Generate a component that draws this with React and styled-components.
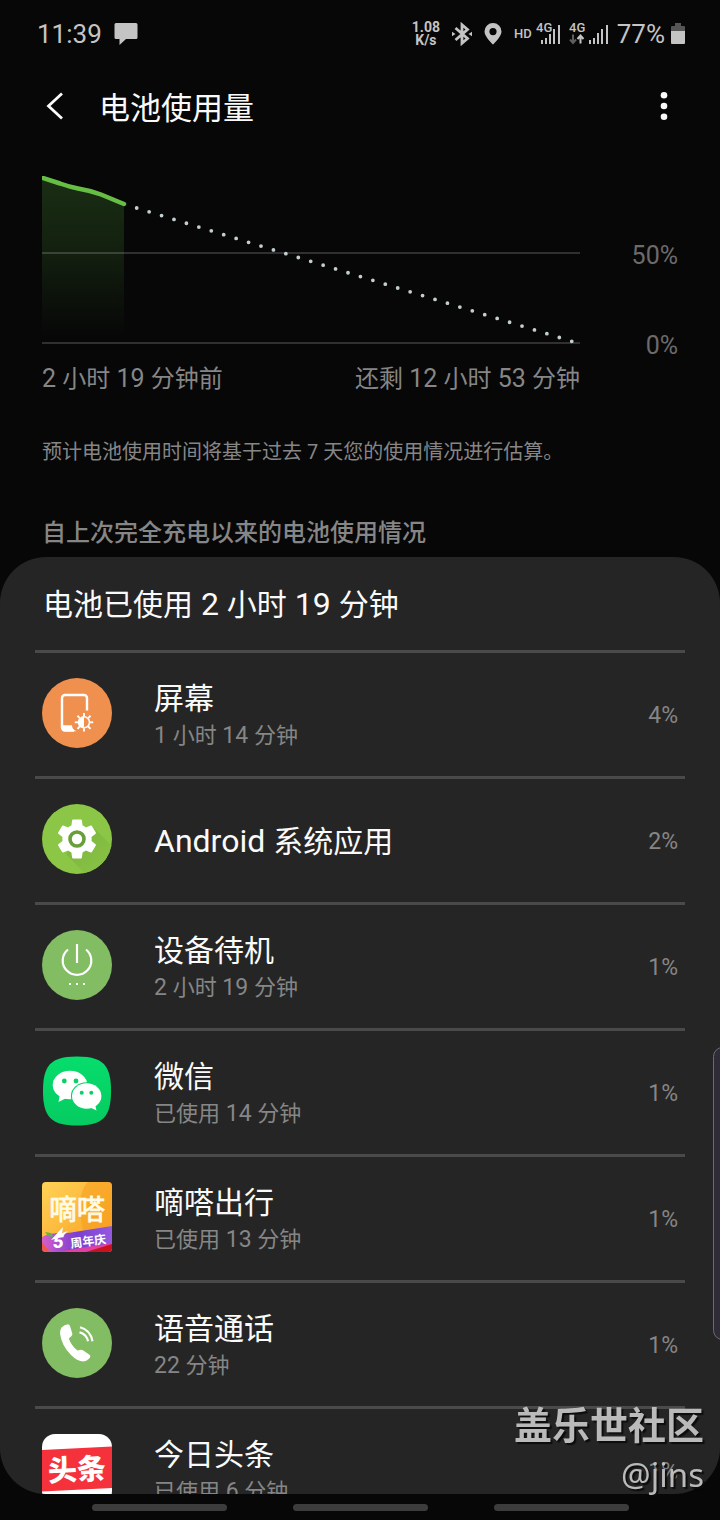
import React from "react";
import styled, { createGlobalStyle } from "styled-components";

const GlobalStyle = createGlobalStyle`
  * {
    box-sizing: border-box;
  }
  body {
    margin: 0;
    background: #070707;
    color: #fafafa;
    font-family: Roboto, "Noto Sans CJK SC", sans-serif;
  }
  button {
    border: 0;
    padding: 0;
    background: none;
    color: inherit;
    font: inherit;
    cursor: pointer;
  }
  h1, h2, h3, p, ul {
    margin: 0;
    padding: 0;
    font-weight: 400;
  }
  svg {
    display: block;
    flex: none;
  }
`;

const Screen = styled.div`
  position: relative;
  display: flex;
  flex-direction: column;
  height: 100vh;
  overflow: hidden;
`;

const StatusBar = styled.div`
  display: flex;
  align-items: center;
  justify-content: space-between;
  height: 68px;
  padding: 0 35px 0 37px;
  color: #c4c4c4;
  font-size: 26px;
`;

const StatusGroup = styled.div`
  display: flex;
  align-items: center;
  gap: ${(props) => props.$gap}px;
`;

const Speed = styled.div`
  font-size: 14px;
  font-weight: 700;
  line-height: 13px;
  text-align: center;
`;

const Hd = styled.span`
  font-size: 13px;
  font-weight: 500;
  line-height: 16px;
`;

const TopBar = styled.header`
  display: flex;
  align-items: center;
  height: 76px;
  padding: 0 42px;
`;

const IconButton = styled.button`
  display: flex;
  align-items: center;
  justify-content: center;
  width: 28px;
  height: 40px;
`;

const Title = styled.h1`
  flex: 1;
  margin-left: 29px;
  padding-top: 5px;
  font-size: 31px;
  line-height: 40px;
`;

const Usage = styled.section`
  display: grid;
  grid-template-columns: 1fr 98px;
  padding: 32px 42px 0;
`;

const Graph = styled.svg`
  width: 100%;
  height: auto;
`;

const Scale = styled.div`
  display: flex;
  flex-direction: column;
  justify-content: flex-end;
  gap: 60px;
  color: #6b6b6b;
  font-size: 25px;
  line-height: 30px;
  text-align: right;
  margin-bottom: -16px;
`;

const TimeRange = styled.div`
  display: flex;
  justify-content: space-between;
  padding-top: 18px;
  color: #868686;
  font-size: 24px;
  line-height: 32px;
`;

const Hint = styled.p`
  padding: 42px 42px 0;
  color: #868686;
  font-size: 20px;
  line-height: 30px;
`;

const SectionTitle = styled.h2`
  padding: 50px 42px 8px;
  color: #868686;
  font-size: 24px;
  font-weight: 500;
  line-height: 32px;
`;

const Card = styled.main`
  flex: 1;
  min-height: 0;
  overflow-y: auto;
  scrollbar-width: none;
  padding: 0 35px;
  border-radius: 46px;
  background: #252525;
`;

const CardTitle = styled.h3`
  padding: 28px 8px 25px;
  font-size: 30px;
  line-height: 40px;
`;

const AppList = styled.ul`
  list-style: none;
`;

const AppRow = styled.li`
  border-top: 3px solid #4a4a4a;
`;

const AppButton = styled.button`
  display: flex;
  align-items: center;
  width: 100%;
  height: 123px;
  padding: 2px 7px 0;
  text-align: left;

  > svg {
    margin-bottom: 5px;
  }
`;

const AppText = styled.div`
  flex: 1;
  margin-left: 42px;
`;

const AppName = styled.div`
  font-size: 30px;
  line-height: 40px;
`;

const AppTime = styled.div`
  color: #868686;
  font-size: 22px;
  line-height: 34px;
`;

// latin letters and digits run slightly larger than the chinese text
const Latin = styled.span`
  font-size: ${(props) => props.$size}px;
  line-height: 1;
`;

const Percent = styled.span`
  color: #868686;
  font-size: 23px;
  line-height: 32px;
`;

const NavBar = styled.nav`
  display: flex;
  align-items: center;
  justify-content: center;
  gap: 66px;
  height: 26px;
`;

const NavButton = styled.button`
  width: 135px;
  height: 7px;
  border-radius: 4px;
  background: #3c3c3c;
`;

const EdgeHandle = styled.div`
  position: absolute;
  top: 1047px;
  right: -12px;
  width: 19px;
  height: 293px;
  border: 1px solid #6c6974;
  border-radius: 10px;
  background: #2f2c38;
`;

const Watermark = styled.div`
  position: absolute;
  right: 16px;
  bottom: 22px;
  color: #c2c2c2;
  opacity: 0.95;
  text-align: right;
  text-shadow: 2px 2px 1px #0c0c0c;
  pointer-events: none;
`;

const Community = styled.div`
  font-size: 38px;
  font-weight: 700;
  line-height: 52px;
`;

const Author = styled.div`
  font-family: "Noto Sans", sans-serif;
  font-size: 33px;
  line-height: 46px;
`;

function Mixed({ text, size }) {
  return text.split(/([\dA-Za-z ]+)/).map((part, i) =>
    i % 2 ? (
      <Latin key={i} $size={size}>
        {part}
      </Latin>
    ) : (
      part
    )
  );
}

function MessageIcon() {
  return (
    <svg width="24" height="24" viewBox="0 0 24 24" fill="#c4c4c4">
      <path d="M2 1h20a1.500 1.500 0 0 1 1.500 1.500v13A1.500 1.500 0 0 1 22 17H12l-6.500 6V17H2a1.500 1.500 0 0 1-1.500-1.500v-13A1.500 1.500 0 0 1 2 1z" />
    </svg>
  );
}

function BluetoothIcon() {
  return (
    <svg width="20" height="24" viewBox="0 0 20 24" fill="none" stroke="#c4c4c4" strokeWidth="2.800">
      <path d="M3.500 6l12 10.500-5.500 4.700V2.800l5.500 4.700L3.500 18" />
      <path d="M0 9.800l3.500 2.200L0 14.200zM20 9.800L16.500 12l3.500 2.200z" fill="#c4c4c4" stroke="none" />
    </svg>
  );
}

function LocationIcon() {
  return (
    <svg width="18" height="22" viewBox="0 0 18 22" fill="#c4c4c4">
      <path
        fillRule="evenodd"
        d="M9 0a8.500 8.500 0 0 0-8.500 8.500C.5 14 9 21.500 9 21.500s8.500-7.500 8.500-13A8.500 8.500 0 0 0 9 0zm0 5a3.600 3.600 0 1 1 0 7.200A3.600 3.600 0 0 1 9 5z"
      />
    </svg>
  );
}

function Signal({ arrows }) {
  const shift = arrows ? 15 : 0;
  return (
    <svg width={25 + shift} height="24" viewBox={`0 0 ${25 + shift} 24`}>
      <text x="0" y="10" fill="#c4c4c4" fontSize="13" fontWeight="500">
        4G
      </text>
      {arrows && (
        <g fill="none" strokeWidth="2">
          <path d="M4 12.500v8M1 17.500l3 3.500 3-3.500" stroke="#5e5e5e" />
          <path d="M11.500 21.500v-8M8.500 17l3-3.500 3 3.500" stroke="#c4c4c4" />
        </g>
      )}
      <g fill="#c4c4c4">
        <rect x={5 + shift} y="18" width="2" height="4" />
        <rect x={9 + shift} y="16" width="2" height="6" />
        <rect x={13 + shift} y={arrows ? 11 : 12} width="2" height={arrows ? 11 : 10} />
        <rect x={17 + shift} y="7" width="2" height="15" />
        <rect x={22 + shift} y="3" width="2" height="19" />
      </g>
    </svg>
  );
}

function BatteryIcon() {
  return (
    <svg width="14" height="22" viewBox="0 0 14 22">
      <path d="M4 0h6v3h3a1 1 0 0 1 1 1v4H0V4a1 1 0 0 1 1-1h3z" fill="#555" />
      <path d="M0 8h14v12a1 1 0 0 1-1 1H1a1 1 0 0 1-1-1z" fill="#c4c4c4" />
    </svg>
  );
}

function BatteryGraph() {
  return (
    <Graph viewBox="0 0 538 169" role="img" aria-label="电池电量">
      <defs>
        <linearGradient id="used" x1="0" y1="0" x2="0" y2="1">
          <stop offset="0" stopColor="#1a2e14" />
          <stop offset="0.45" stopColor="#13200f" />
          <stop offset="1" stopColor="#070707" />
        </linearGradient>
      </defs>
      <path d="M0 2L36 13L56 18L82 28V160H0z" fill="url(#used)" />
      <rect x="0" y="76" width="538" height="2" fill="#fff" fillOpacity="0.17" />
      <rect x="0" y="166" width="538" height="2" fill="#fff" fillOpacity="0.17" />
      <path
        d="M-2 1L18 7.500Q28 11 36 12.500Q48 14.500 59 18.500L82 28"
        fill="none"
        stroke="#67be45"
        strokeWidth="4.500"
        strokeLinecap="round"
      />
      <path
        d="M94.700 32L532 166"
        fill="none"
        stroke="#c3ced0"
        strokeWidth="3.800"
        strokeLinecap="round"
        strokeDasharray="0 13"
      />
    </Graph>
  );
}

function ScreenIcon() {
  const rays = [0, 45, 90, 135, 180, 225, 270, 315];
  return (
    <svg width="70" height="70" viewBox="0 0 70 70">
      <circle cx="35" cy="35" r="35" fill="#f0904f" />
      <path
        d="M45 32.500V20a3 3 0 0 0-3-3H23a3 3 0 0 0-3 3v29.500a3 3 0 0 0 3 3h9"
        fill="none"
        stroke="#fff"
        strokeWidth="2.400"
      />
      <path d="M20 47.300h10c0 3 1.500 5 4.500 6H23a3 3 0 0 1-3-3z" fill="#fff" />
      <g transform="translate(42 44.300)">
        <circle r="5.500" fill="none" stroke="#fff" strokeWidth="1.500" />
        <path d="M0-5.500a5.500 5.500 0 0 0 0 11z" fill="#fff" />
        {rays.map((angle) => (
          <path key={angle} d="M0-6V-9.200" stroke="#fff" strokeWidth="1.900" transform={`rotate(${angle})`} />
        ))}
      </g>
    </svg>
  );
}

function AndroidIcon() {
  return (
    <svg width="70" height="70" viewBox="0 0 70 70">
      <defs>
        <clipPath id="androidClip">
          <circle cx="35" cy="35" r="35" />
        </clipPath>
        <linearGradient id="androidShade" x1="0" y1="0" x2="1" y2="1">
          <stop offset="0" stopColor="#7bb33e" />
          <stop offset="1" stopColor="#8bc646" />
        </linearGradient>
      </defs>
      <circle cx="35" cy="35" r="35" fill="#8bc646" />
      <path d="M50 22L75 47V75H48L24 50z" fill="url(#androidShade)" clipPath="url(#androidClip)" />
      <path
        transform="translate(11.600 11.600) scale(1.950)"
        fill="#fff"
        d="M19.430 12.980c.04-.32.07-.64.07-.98s-.03-.66-.07-.98l2.110-1.650c.19-.15.24-.42.12-.64l-2-3.460c-.12-.22-.39-.3-.61-.22l-2.490 1c-.52-.4-1.080-.73-1.690-.98l-.38-2.650C14.460 2.180 14.250 2 14 2h-4c-.25 0-.46.18-.49.42l-.38 2.650c-.61.25-1.170.59-1.690.98l-2.490-1c-.23-.09-.49 0-.61.22l-2 3.460c-.13.22-.07.49.12.64l2.110 1.650c-.04.32-.07.65-.07.98s.03.66.07.98l-2.110 1.650c-.19.15-.24.42-.12.64l2 3.460c.12.22.39.3.61.22l2.490-1c.52.4 1.080.73 1.690.98l.38 2.650c.03.24.24.42.49.42h4c.25 0 .46-.18.49-.42l.38-2.650c.61-.25 1.170-.59 1.690-.98l2.490 1c.23.09.49 0 .61-.22l2-3.460c.12-.22.07-.49-.12-.64z"
      />
      <circle cx="35" cy="35" r="7" fill="#fff" stroke="#689f38" strokeWidth="3.600" />
    </svg>
  );
}

function StandbyIcon() {
  return (
    <svg width="70" height="70" viewBox="0 0 70 70">
      <circle cx="35" cy="35" r="35" fill="#82bc63" />
      <path
        d="M26 19.500a14.300 14.300 0 1 0 18 0M35 14v19"
        fill="none"
        stroke="#fff"
        strokeWidth="2.200"
      />
      <g fill="#fff">
        <rect x="27" y="53" width="2" height="2" />
        <rect x="34" y="53" width="2" height="2" />
        <rect x="41" y="53" width="2" height="2" />
      </g>
    </svg>
  );
}

function WechatIcon() {
  return (
    <svg width="70" height="70" viewBox="0 0 70 70">
      <defs>
        <linearGradient id="wechat" x1="0" y1="0" x2="0" y2="1">
          <stop offset="0" stopColor="#06dd6c" />
          <stop offset="1" stopColor="#06cb60" />
        </linearGradient>
      </defs>
      <path d="M35 .5C61 .5 69 9 69 35S61 69.500 35 69.500 1 61 1 35 9 .5 35 .5z" fill="url(#wechat)" />
      <ellipse cx="28" cy="29" rx="17.300" ry="14.300" fill="#fff" />
      <path d="M18 38l-1.500 8 8-4z" fill="#fff" />
      <ellipse cx="44.700" cy="40" rx="15.800" ry="13.800" fill="#06d265" />
      <ellipse cx="44.700" cy="40" rx="14.700" ry="12.700" fill="#fff" />
      <path d="M47 51l7.500 3.500-1.500-6z" fill="#fff" />
      <g fill="#06d265">
        <circle cx="22.300" cy="25" r="2.400" />
        <circle cx="34" cy="25" r="2.400" />
        <circle cx="39.700" cy="36.700" r="2" />
        <circle cx="49.300" cy="36.700" r="2" />
      </g>
    </svg>
  );
}

function DidaIcon() {
  return (
    <svg width="70" height="70" viewBox="0 0 70 70">
      <defs>
        <clipPath id="didaClip">
          <rect width="70" height="70" rx="4" />
        </clipPath>
        <linearGradient id="didaSky" x1="0" y1="0" x2="1" y2="1">
          <stop offset="0" stopColor="#ffd257" />
          <stop offset="1" stopColor="#f99d1f" />
        </linearGradient>
        <linearGradient id="didaBand" x1="0" y1="0" x2="1" y2="0">
          <stop offset="0" stopColor="#d65fc9" />
          <stop offset="0.5" stopColor="#7a3fd2" />
          <stop offset="1" stopColor="#9459df" />
        </linearGradient>
      </defs>
      <g clipPath="url(#didaClip)">
        <rect width="70" height="70" fill="url(#didaSky)" />
        <path d="M46 0C36 10 36 30 42 52L70 46V0z" fill="#f59c1d" fillOpacity="0.55" />
        <path d="M0 55Q10 50 26 51L70 44V70H0z" fill="url(#didaBand)" />
        <path d="M0 60L8 70H0z" fill="#f0574a" />
        <path d="M14 70L70 61V70z" fill="#e0409f" />
        <path d="M44 70L70 62V70z" fill="#c8131f" />
        <path d="M3 50l6 1 2 4-5-1z" fill="#58b947" />
        <path d="M9 58L21 45l-1 6 6-2-6 6z" fill="#fff" />
      </g>
      <text x="11" y="66" fill="#fff" fontSize="19" fontWeight="900" fontStyle="italic">
        5
      </text>
      <text
        x="7"
        y="38"
        fill="#fffbe8"
        stroke="#fffbe8"
        strokeWidth="0.800"
        fontSize="28"
        fontFamily='"Noto Sans CJK SC", sans-serif'
      >
        嘀嗒
      </text>
      <text
        x="29"
        y="66"
        fill="#fff"
        fontSize="12"
        fontWeight="700"
        fontFamily='"Noto Sans CJK SC", sans-serif'
        transform="rotate(-8 29 66)"
      >
        周年庆
      </text>
    </svg>
  );
}

function CallIcon() {
  return (
    <svg width="70" height="70" viewBox="0 0 70 70">
      <circle cx="35" cy="35" r="35" fill="#82bc63" />
      <path
        d="M19.500 19.500Q22.500 16.500 26 16.300Q27.300 16.300 28 18L30.300 25.500Q30.500 27 29.500 28L26.800 30.500Q29.500 38 35.500 42.500L39 41.800Q40.300 41.800 41.300 42.500L47.500 46.700Q49 48 48 49.500Q45.500 53 41.500 53.500Q35 53 29 47Q19.500 37.500 18 25.500Q17.800 22 19.500 19.500z"
        fill="#fff"
      />
      <path
        d="M37.500 24.200Q44.500 26 46 33.300M38 19.300Q48.500 22 50.500 33.300"
        fill="none"
        stroke="#fff"
        strokeWidth="2.200"
      />
    </svg>
  );
}

function ToutiaoIcon() {
  return (
    <svg width="70" height="70" viewBox="0 0 70 70">
      <rect width="70" height="70" rx="13" fill="#fff" />
      <path d="M0 16L70 12.500V54L0 57.500z" fill="#f5323c" />
      <text
        x="6"
        y="46"
        fill="#fff"
        fontSize="29"
        fontWeight="900"
        fontFamily='"Noto Sans CJK SC", sans-serif'
        transform="rotate(-3 35 35)"
      >
        头条
      </text>
    </svg>
  );
}

const apps = [
  { name: "屏幕", time: "1 小时 14 分钟", percent: 4, Icon: ScreenIcon },
  { name: "Android 系统应用", percent: 2, Icon: AndroidIcon },
  { name: "设备待机", time: "2 小时 19 分钟", percent: 1, Icon: StandbyIcon },
  { name: "微信", time: "已使用 14 分钟", percent: 1, Icon: WechatIcon },
  { name: "嘀嗒出行", time: "已使用 13 分钟", percent: 1, Icon: DidaIcon },
  { name: "语音通话", time: "22 分钟", percent: 1, Icon: CallIcon },
  { name: "今日头条", time: "已使用 6 分钟", percent: 1, Icon: ToutiaoIcon },
];

function AppItem({ app }) {
  const { name, time, percent, Icon } = app;
  return (
    <AppRow>
      <AppButton>
        <Icon />
        <AppText>
          <AppName>
            <Mixed text={name} size={32} />
          </AppName>
          {time && (
            <AppTime>
              <Mixed text={time} size={23} />
            </AppTime>
          )}
        </AppText>
        <Percent>{percent}%</Percent>
      </AppButton>
    </AppRow>
  );
}

export default function App() {
  return (
    <Screen>
      <GlobalStyle />
      <StatusBar>
        <StatusGroup $gap={12}>
          <span>11:39</span>
          <MessageIcon />
        </StatusGroup>
        <StatusGroup $gap={8}>
          <StatusGroup $gap={4}>
            <StatusGroup $gap={12}>
              <Speed>
                1.08
                <br />
                K/s
              </Speed>
              <BluetoothIcon />
              <LocationIcon />
              <Hd>HD</Hd>
            </StatusGroup>
            <Signal />
          </StatusGroup>
          <Signal arrows />
          <StatusGroup $gap={6}>
            <span>77%</span>
            <BatteryIcon />
          </StatusGroup>
        </StatusGroup>
      </StatusBar>

      <TopBar>
        <IconButton aria-label="返回">
          <svg width="28" height="28" viewBox="0 0 28 28" fill="none" stroke="#fafafa" strokeWidth="2.800">
            <path d="M20 1.500L6.500 14L20 26.500" />
          </svg>
        </IconButton>
        <Title>电池使用量</Title>
        <IconButton aria-label="更多选项">
          <svg width="8" height="28" viewBox="0 0 8 28" fill="#fafafa">
            <circle cx="4" cy="3.300" r="3.300" />
            <circle cx="4" cy="14" r="3.300" />
            <circle cx="4" cy="24.700" r="3.300" />
          </svg>
        </IconButton>
      </TopBar>

      <Usage>
        <BatteryGraph />
        <Scale>
          <span>50%</span>
          <span>0%</span>
        </Scale>
        <TimeRange>
          <span>
            <Mixed text="2 小时 19 分钟前" size={25} />
          </span>
          <span>
            <Mixed text="还剩 12 小时 53 分钟" size={25} />
          </span>
        </TimeRange>
      </Usage>
      <Hint>预计电池使用时间将基于过去 7 天您的使用情况进行估算。</Hint>
      <SectionTitle>自上次完全充电以来的电池使用情况</SectionTitle>

      <Card>
        <CardTitle>
          <Mixed text="电池已使用 2 小时 19 分钟" size={32} />
        </CardTitle>
        <AppList>
          {apps.map((app) => (
            <AppItem key={app.name} app={app} />
          ))}
        </AppList>
      </Card>

      <NavBar>
        <NavButton aria-label="最近" />
        <NavButton aria-label="主页" />
        <NavButton aria-label="后退" />
      </NavBar>

      <EdgeHandle />
      <Watermark>
        <Community>盖乐世社区</Community>
        <Author>@jins</Author>
      </Watermark>
    </Screen>
  );
}
